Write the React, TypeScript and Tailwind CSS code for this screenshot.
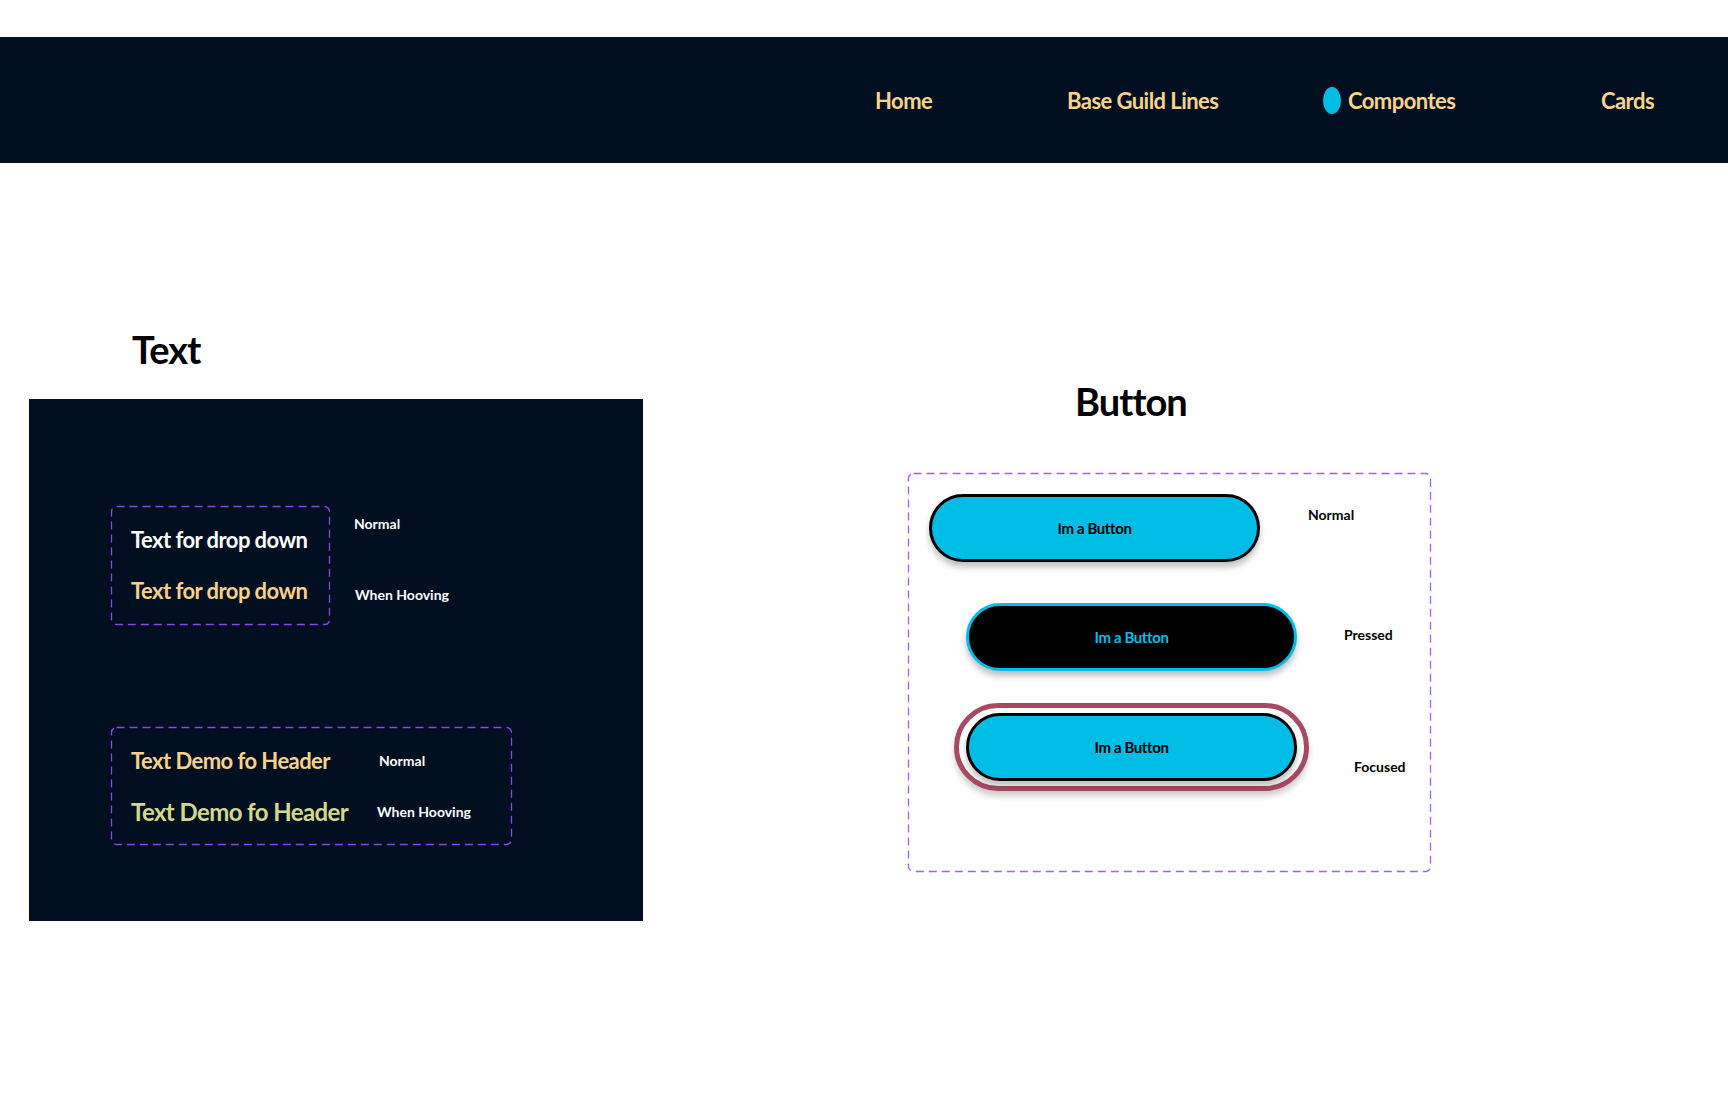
import React from "react";

const font = { fontFamily: "Lato, 'Open Sans', sans-serif" };

function DashFrame({ color }: { color: string }) {
  return (
    <svg className="pointer-events-none absolute inset-0 h-full w-full overflow-visible">
      <rect
        x="0.5"
        y="0.5"
        width="calc(100% - 1px)"
        height="calc(100% - 1px)"
        rx="5"
        ry="5"
        fill="none"
        stroke={color}
        strokeWidth="1.3"
        strokeDasharray="8 5"
      />
    </svg>
  );
}

function Btn({ variant }: { variant: "normal" | "pressed" }) {
  if (variant === "pressed") {
    return (
      <div className="flex h-[68px] w-[331px] items-center justify-center rounded-full border-[3px] border-[#00bde6] bg-black text-[15px] font-bold tracking-tight text-[#00bde6] shadow-[0_5px_6px_rgba(0,0,0,0.25)]">
        Im a Button
      </div>
    );
  }
  return (
    <div className="flex h-[68px] w-[331px] items-center justify-center rounded-full border-[3px] border-black bg-[#00bde6] text-[15px] font-bold tracking-tight text-black shadow-[0_5px_6px_rgba(0,0,0,0.25)]">
      Im a Button
    </div>
  );
}

export default function App() {
  return (
    <div className="min-h-screen bg-white" style={font}>
      <nav className="mt-[37px] flex h-[126px] items-center bg-[#010f21] text-[22px] font-bold tracking-tight text-[#f9d38a]">
        <div className="ml-[875px] w-[192px]">Home</div>
        <div className="w-[256px]">Base Guild Lines</div>
        <div className="flex w-[278px] items-center gap-[7px]">
          <span className="inline-block h-[27px] w-[18px] rounded-[50%] bg-[#00bde6]" />
          <span>Compontes</span>
        </div>
        <div>Cards</div>
      </nav>

      <main className="flex items-start">
        <section className="ml-[29px] w-[614px]">
          <h2 className="mt-[163px] mb-[27px] pl-[103px] text-[38px] font-bold leading-[46px] tracking-tight text-black">
            Text
          </h2>
          <div className="h-[522px] bg-[#010f21] pl-[82px] pt-[107px]">
            <div className="flex items-start">
              <div className="relative flex h-[119px] w-[219px] flex-col gap-[21px] pl-[20px] pt-[19px]">
                <DashFrame color="#8a45ee" />
                <div className="text-[22px] font-bold leading-[30px] tracking-tight text-white">
                  Text for drop down
                </div>
                <div className="text-[22px] font-bold leading-[30px] tracking-tight text-[#f8d28a]">
                  Text for drop down
                </div>
              </div>
              <div className="ml-[24px] flex flex-col pt-[8px] text-[14px] font-bold leading-[20px] text-white">
                <div>Normal</div>
                <div className="ml-[1px] mt-[51px]">When Hooving</div>
              </div>
            </div>

            <div className="relative mt-[102px] flex h-[118px] w-[401px] flex-col gap-[21px] pl-[20px] pt-[19px]">
              <DashFrame color="#8a45ee" />
              <div className="flex items-center">
                <div className="w-[248px] text-[22px] font-bold leading-[30px] tracking-tight text-[#f8d28a]">
                  Text Demo fo Header
                </div>
                <div className="text-[14px] font-bold leading-[20px] text-white">Normal</div>
              </div>
              <div className="flex items-center">
                <div className="w-[246px] text-[24px] font-bold leading-[30px] tracking-tight text-[#d3d98b]">
                  Text Demo fo Header
                </div>
                <div className="text-[14px] font-bold leading-[20px] text-white">When Hooving</div>
              </div>
            </div>
          </div>
        </section>

        <section className="ml-[265px]">
          <h2 className="mt-[215px] mb-[49px] pl-[167px] text-[38px] font-bold leading-[46px] tracking-tight text-black">
            Button
          </h2>
          <div className="relative flex h-[399px] w-[523px] flex-col pl-[21px] pt-[21px]">
            <DashFrame color="#a260f3" />
            <div className="flex items-start">
              <Btn variant="normal" />
              <div className="ml-[48px] mt-[11px] text-[14px] font-bold leading-[20px] text-black">Normal</div>
            </div>
            <div className="ml-[37px] mt-[41px] flex items-start">
              <Btn variant="pressed" />
              <div className="ml-[47px] mt-[22px] text-[14px] font-bold leading-[20px] text-black">Pressed</div>
            </div>
            <div className="ml-[25px] mt-[32px] flex items-start">
              <div className="rounded-full border-[5px] border-[#a64a64] bg-white px-[7px] py-[5px] shadow-[0_5px_6px_rgba(0,0,0,0.2)]">
                <Btn variant="normal" />
              </div>
              <div className="ml-[45px] mt-[54px] text-[14px] font-bold leading-[20px] text-black">Focused</div>
            </div>
          </div>
        </section>
      </main>
    </div>
  );
}
